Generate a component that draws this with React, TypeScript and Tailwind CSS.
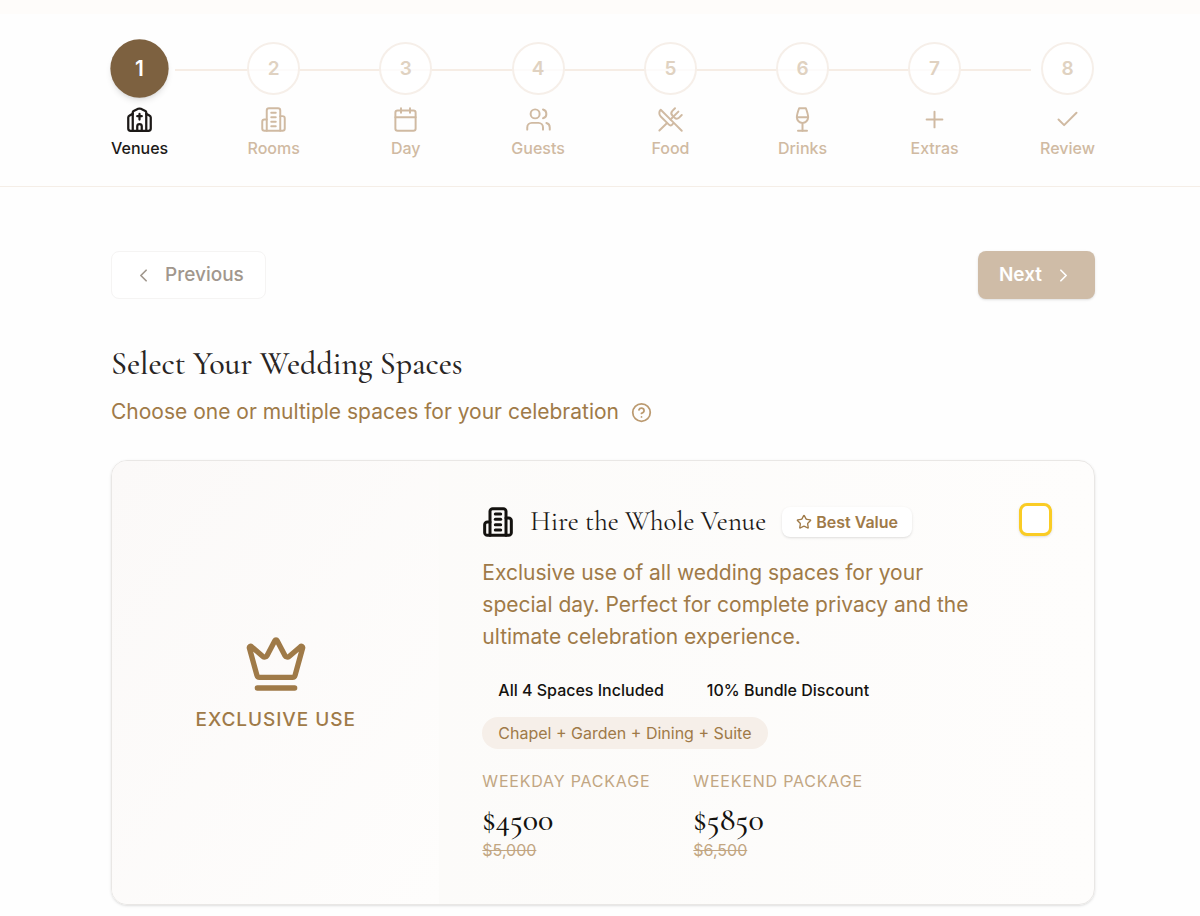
import React, { useState } from 'react';
import {
  Calendar,
  Check,
  ChevronLeft,
  ChevronRight,
  CircleHelp,
  Crown,
  Plus,
  Star,
  Users,
  UtensilsCrossed,
  Wine,
} from 'lucide-react';

interface IconProps {
  className?: string;
  strokeWidth?: number;
}

function ChapelIcon({ className, strokeWidth = 2 }: IconProps) {
  return (
    <svg
      className={className}
      viewBox="0 0 24 24"
      fill="none"
      stroke="currentColor"
      strokeWidth={strokeWidth}
      strokeLinecap="round"
      strokeLinejoin="round"
      aria-hidden="true"
    >
      <path d="M18 22V5.7c0-.6-.3-1-.8-1.3l-4-1.9a3 3 0 0 0-2.4 0l-4 1.9c-.5.3-.8.7-.8 1.3V22" />
      <path d="m18 7 2.8 1.4c.8.4 1.2 1 1.2 1.9V20a2 2 0 0 1-2 2H4a2 2 0 0 1-2-2v-9.7c0-.9.4-1.5 1.2-1.9L6 7" />
      <path d="M12 7v5" />
      <path d="M10 9h4" />
      <path d="M14 22v-4a2 2 0 0 0-4 0v4" />
    </svg>
  );
}

function BuildingIcon({ className, strokeWidth = 2 }: IconProps) {
  return (
    <svg
      className={className}
      viewBox="0 0 24 24"
      fill="none"
      stroke="currentColor"
      strokeWidth={strokeWidth}
      strokeLinecap="round"
      strokeLinejoin="round"
      aria-hidden="true"
    >
      <path d="M6 22V4a2 2 0 0 1 2-2h8a2 2 0 0 1 2 2v18Z" />
      <path d="M6 12H4a2 2 0 0 0-2 2v6a2 2 0 0 0 2 2h2" />
      <path d="M18 9h2a2 2 0 0 1 2 2v9a2 2 0 0 1-2 2h-2" />
      <path d="M10 6h4" />
      <path d="M10 10h4" />
      <path d="M10 14h4" />
      <path d="M10 18h4" />
    </svg>
  );
}

const STEPS: { label: string; icon: React.ComponentType<IconProps> }[] = [
  { label: 'Venues', icon: ChapelIcon },
  { label: 'Rooms', icon: BuildingIcon },
  { label: 'Day', icon: Calendar },
  { label: 'Guests', icon: Users },
  { label: 'Food', icon: UtensilsCrossed },
  { label: 'Drinks', icon: Wine },
  { label: 'Extras', icon: Plus },
  { label: 'Review', icon: Check },
];

const PACKAGES = [
  { label: 'Weekday Package', price: '$4500', original: '$5,000' },
  { label: 'Weekend Package', price: '$5850', original: '$6,500' },
];

const SERIF = "font-['Cormorant_Garamond','Liberation_Serif',serif]";

function Stepper({ current }: { current: number }) {
  return (
    <header className="border-t-14 border-b border-t-[#fefcfa] border-b-[#f5eee7] bg-[#fefefe] pr-[105px] pl-[111px]">
      <nav aria-label="Booking steps" className="relative pt-7 pb-[26px]">
        {/* Connector behind the circles */}
        <div className="absolute top-[55px] right-16 left-16 h-[2px] bg-[#f6ede5]" />
        <ol className="relative flex justify-between">
          {STEPS.map(({ label, icon: Icon }, i) => {
            const active = i === current;
            return (
              <li key={label}>
                <button
                  type="button"
                  aria-current={active ? 'step' : undefined}
                  className={`flex flex-col items-center ${active ? 'text-[#1c1917]' : 'text-[#d0baa2]'}`}
                >
                  <span
                    className={`flex size-[53px] items-center justify-center rounded-full text-[19px] leading-7 font-semibold ${
                      active
                        ? 'scale-110 bg-[#7d6140] text-white shadow-md'
                        : 'border-2 border-[#f6efe9] bg-white/80 text-[#e0d2c1]'
                    }`}
                  >
                    {i + 1}
                  </span>
                  <Icon className="mt-[11px] size-[27px]" strokeWidth={active ? 2 : 1.75} />
                  <span className="mt-[3px] text-base leading-6 font-medium">{label}</span>
                </button>
              </li>
            );
          })}
        </ol>
      </nav>
    </header>
  );
}

function VenueCard() {
  const [selected, setSelected] = useState(false);

  return (
    <section className="grid grid-cols-3 overflow-hidden rounded-2xl border border-[#e9e7e5] bg-gradient-to-r from-[#fbfaf8] to-[#fefdfc] shadow-sm">
      <div className="flex flex-col items-center justify-center bg-gradient-to-br from-[#fbf9f8] to-[#fefdfc] text-[#9f7a48]">
        <Crown className="size-16" strokeWidth={2} />
        <p className="mt-[10px] text-[19px] leading-7 font-medium tracking-wider uppercase">Exclusive Use</p>
      </div>

      <div className="col-span-2 py-[42px] pr-[42px] pl-[43px]">
        <div className="flex items-start justify-between">
          <div className="flex h-[38px] items-center gap-4">
            <BuildingIcon className="size-8 text-[#14120f]" strokeWidth={2.25} />
            <h3 className={`${SERIF} text-[27px] leading-8 text-[#1c1917]`}>Hire the Whole Venue</h3>
            <span className="flex h-[30px] items-center gap-1 rounded-lg bg-white px-[14px] text-base font-semibold text-[#9f7a48] shadow-sm">
              <Star className="size-4" strokeWidth={2} />
              Best Value
            </span>
          </div>
          <input
            type="checkbox"
            aria-label="Hire the Whole Venue"
            checked={selected}
            onChange={(e) => setSelected(e.target.checked)}
            className="size-[33px] appearance-none rounded-lg border-3 border-[#facc25] bg-white shadow-sm checked:bg-[#facc25]"
          />
        </div>

        <p className="mt-4 max-w-[504px] text-[21px] leading-8 text-[#9f7a48]">
          Exclusive use of all wedding spaces for your special day. Perfect for complete privacy and the ultimate
          celebration experience.
        </p>

        <ul className="mt-[21px] flex flex-wrap gap-[11px] text-base leading-8">
          <li className="px-4 font-medium text-[#14120f]">All 4 Spaces Included</li>
          <li className="px-4 font-medium text-[#14120f]">10% Bundle Discount</li>
          <li className="rounded-full bg-[#f6efe9] px-4 text-[#9f7a48]">Chapel + Garden + Dining + Suite</li>
        </ul>

        <div className="mt-5 flex gap-[43px]">
          {PACKAGES.map((pkg) => (
            <div key={pkg.label}>
              <p className="text-base leading-6 tracking-wider text-[#c2a682] uppercase">{pkg.label}</p>
              <p className={`${SERIF} mt-2 text-[32px] leading-[37px] font-medium text-[#14120f]`}>{pkg.price}</p>
              <p className="text-base leading-6 text-[#c2a682] line-through">{pkg.original}</p>
            </div>
          ))}
        </div>
      </div>
    </section>
  );
}

export default function App() {
  return (
    <div className="min-h-screen bg-[#fefefe] font-['Inter',sans-serif]">
      <Stepper current={0} />

      <main className="pt-16 pr-[105px] pb-[10px] pl-[111px]">
        <div className="flex justify-between">
          <button
            type="button"
            className="flex h-12 items-center gap-[11px] rounded-lg border border-[#f5f4f3] bg-white px-[21px] text-[19px] leading-7 font-medium text-[#a1978d]"
          >
            <ChevronLeft className="size-[21px]" strokeWidth={2} />
            Previous
          </button>
          <button
            type="button"
            className="flex h-12 items-center gap-[11px] rounded-lg bg-[#cfbca7] px-[21px] text-[19px] leading-7 font-semibold text-white shadow-sm"
          >
            Next
            <ChevronRight className="size-[21px]" strokeWidth={2} />
          </button>
        </div>

        <h2 className={`${SERIF} mt-[45px] text-[32px] leading-10 font-medium text-[#292524]`}>
          Select Your Wedding Spaces
        </h2>
        <div className="mt-3 mb-8 flex items-center gap-3 text-[#9f7a48]">
          <p className="text-[21px] leading-8">Choose one or multiple spaces for your celebration</p>
          <button type="button" aria-label="Help" className="text-[#bb9a70]">
            <CircleHelp className="size-[21px]" strokeWidth={2} />
          </button>
        </div>

        <VenueCard />
      </main>
    </div>
  );
}
